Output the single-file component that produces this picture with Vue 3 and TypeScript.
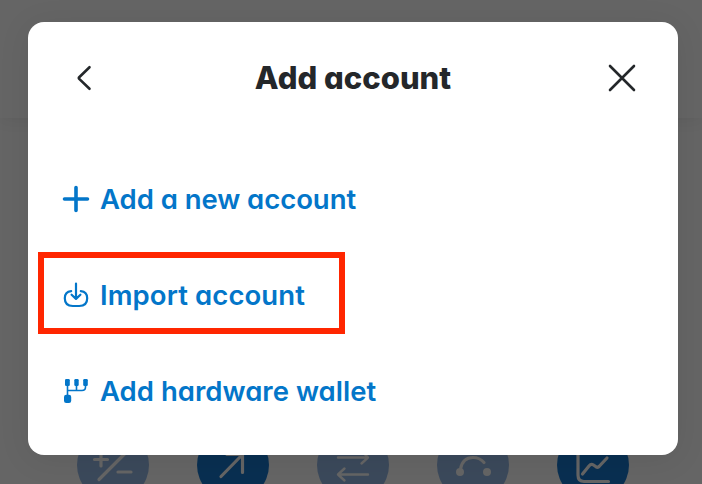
<script setup lang="ts">
type IconName = 'plus' | 'import' | 'hardware'

interface MenuEntry {
  icon: IconName
  label: string
  highlighted: boolean
}

const entries: MenuEntry[] = [
  { icon: 'plus', label: 'Add a new account', highlighted: false },
  { icon: 'import', label: 'Import account', highlighted: true },
  { icon: 'hardware', label: 'Add hardware wallet', highlighted: false },
]
</script>

<template>
  <div class="screen">
    <div class="page">
      <div class="topbar"></div>
      <div class="actions">
        <span class="action muted">
          <svg viewBox="0 0 72 72"><path d="M17.5 30.5h13M24 24v13M22 50.500 50.500 22M41 43h13" /></svg>
        </span>
        <span class="action">
          <svg viewBox="0 0 72 72"><path d="M24 47.500 45 26M30 25.500h15.500v18" /></svg>
        </span>
        <span class="action muted">
          <svg viewBox="0 0 72 72"><path class="thin" d="M21 28.500h30M44.500 22l6.500 6.500-6.500 6M51 45.500H21M27.500 39.500 21 45.500l6.500 6" /></svg>
        </span>
        <span class="action muted">
          <svg viewBox="0 0 72 72">
            <path d="M23.500 40C25 32 30 28.500 36 28.500c4.500 0 8 1.500 11 5" />
            <circle cx="23" cy="43" r="4" />
            <circle cx="50" cy="43" r="4" />
          </svg>
        </span>
        <span class="action">
          <svg viewBox="0 0 72 72"><path d="M21 24v22q0 6.500 6 6.500h24.500M25.500 45l6.500-8q2-2.500 4.500-1l2.500 1.800q2 1.200 3.500-.8l7.500-8" /></svg>
        </span>
      </div>
    </div>

    <div class="overlay">
      <section class="dialog">
        <header class="header">
          <button class="icon-button" aria-label="Back">
            <svg width="32" height="32" viewBox="0 0 32 32"><path d="M21.500 5.200 11.200 15.200q-.8.800 0 1.600L21.500 26.800" /></svg>
          </button>
          <h1 class="title">Add account</h1>
          <button class="icon-button" aria-label="Close">
            <svg width="32" height="32" viewBox="0 0 32 32"><path d="M4 4l24 24M28 4 4 28" /></svg>
          </button>
        </header>

        <nav class="menu">
          <button
            v-for="entry in entries"
            :key="entry.label"
            class="entry"
            :class="[entry.icon, { highlighted: entry.highlighted }]"
          >
            <svg v-if="entry.icon === 'plus'" class="entry-icon" viewBox="0 0 28 28">
              <path class="bold" d="M14 2.500v23M2.500 14h23" />
            </svg>
            <svg v-else-if="entry.icon === 'import'" class="entry-icon" viewBox="0 0 28 28">
              <path d="M14 2.500v15M9.600 13.700 14 17.900l4.400-4.200M9.200 10.200C4.900 10.700 2.800 12.900 2.800 17.300c0 5.600 2.600 7.700 8 7.700h6.400c5.400 0 8-2.100 8-7.700 0-4.400-2.100-6.600-6.400-7.100" />
            </svg>
            <svg v-else class="entry-icon" viewBox="0 0 28 28">
              <g class="solid">
                <rect x="3" y="2" width="4.800" height="7" rx="1.200" />
                <rect x="12.300" y="2" width="4.400" height="7" rx="1.200" />
                <rect x="21.200" y="2" width="4.600" height="7" rx="1.200" />
                <rect x="2" y="17.800" width="7.200" height="8.200" rx="2.200" />
              </g>
              <path class="wire" d="M5.500 8v11M5.500 13.500H20q3.500 0 3.500-3.500V8M14.500 8v5.500" />
            </svg>
            <span class="label">{{ entry.label }}</span>
          </button>
        </nav>
      </section>
    </div>
  </div>
</template>

<style>
body {
  margin: 0;
}
</style>

<style scoped>
.screen {
  position: relative;
  width: 702px;
  height: 484px;
  overflow: hidden;
  font-family: Inter, 'Liberation Sans', sans-serif;
  font-feature-settings: 'cv11' 1;
}

.page {
  display: flex;
  flex-direction: column;
  height: 100%;
  background: #656565;
}

.topbar {
  flex: none;
  height: 118px;
  background: #656565;
  box-shadow: 0 1px 16px rgba(0, 0, 0, 0.07);
}

.actions {
  display: flex;
  justify-content: center;
  gap: 48px;
  padding: 311px 0 0 4px;
}

.action {
  flex: none;
  width: 72px;
  height: 72px;
  border-radius: 50%;
  background: #092f51;
}

.action.muted {
  background: #3b495b;
}

.action svg {
  display: block;
  width: 72px;
  height: 72px;
  fill: none;
  stroke: #656565;
  stroke-width: 3.2;
  stroke-linecap: round;
  stroke-linejoin: round;
}

.action .thin {
  stroke-width: 2.4;
}

.action circle {
  fill: #656565;
  stroke: none;
}

.overlay {
  position: absolute;
  inset: 0;
  display: flex;
  align-items: flex-start;
  padding: 22px 24px 29px 28px;
}

.dialog {
  box-sizing: border-box;
  width: 650px;
  height: 433px;
  border-radius: 16px;
  background: #fff;
  box-shadow: 0 4px 32px rgba(0, 0, 0, 0.08);
}

.header {
  display: flex;
  align-items: center;
  justify-content: space-between;
  height: 112px;
  padding: 0 40px;
}

button {
  display: flex;
  align-items: center;
  margin: 0;
  padding: 0;
  border: 0;
  background: none;
  font: inherit;
  font-feature-settings: inherit;
}

.icon-button svg {
  fill: none;
  stroke: #24272a;
  stroke-width: 2.6;
  stroke-linecap: round;
  stroke-linejoin: round;
}

.title {
  margin: 0;
  color: #24272a;
  font-size: 31px;
  font-weight: 800;
  line-height: 40px;
  letter-spacing: 0;
}

.menu {
  display: flex;
  flex-direction: column;
  align-items: flex-start;
  gap: 14px;
  padding: 22px 10px 0;
}

.entry {
  box-sizing: border-box;
  width: 307px;
  height: 82px;
  gap: 10px;
  padding: 4px 18px 0;
  border: 6px solid transparent;
  color: #0376c9;
  white-space: nowrap;
}

.entry.highlighted {
  border-color: #ff2600;
}

.entry-icon {
  flex: none;
  width: 28px;
  height: 28px;
  fill: none;
  stroke: #0376c9;
  stroke-width: 2.2;
  stroke-linecap: round;
  stroke-linejoin: round;
}

.bold {
  stroke-width: 3.6;
}

.wire {
  stroke-width: 1.6;
}

.solid {
  fill: #0376c9;
  stroke: none;
}

.label {
  font-size: 27.5px;
  font-weight: 600;
  line-height: 40px;
  letter-spacing: 0.02px;
}

.plus .label {
  letter-spacing: -0.05px;
}

.import .label {
  letter-spacing: 0.1px;
}
</style>
